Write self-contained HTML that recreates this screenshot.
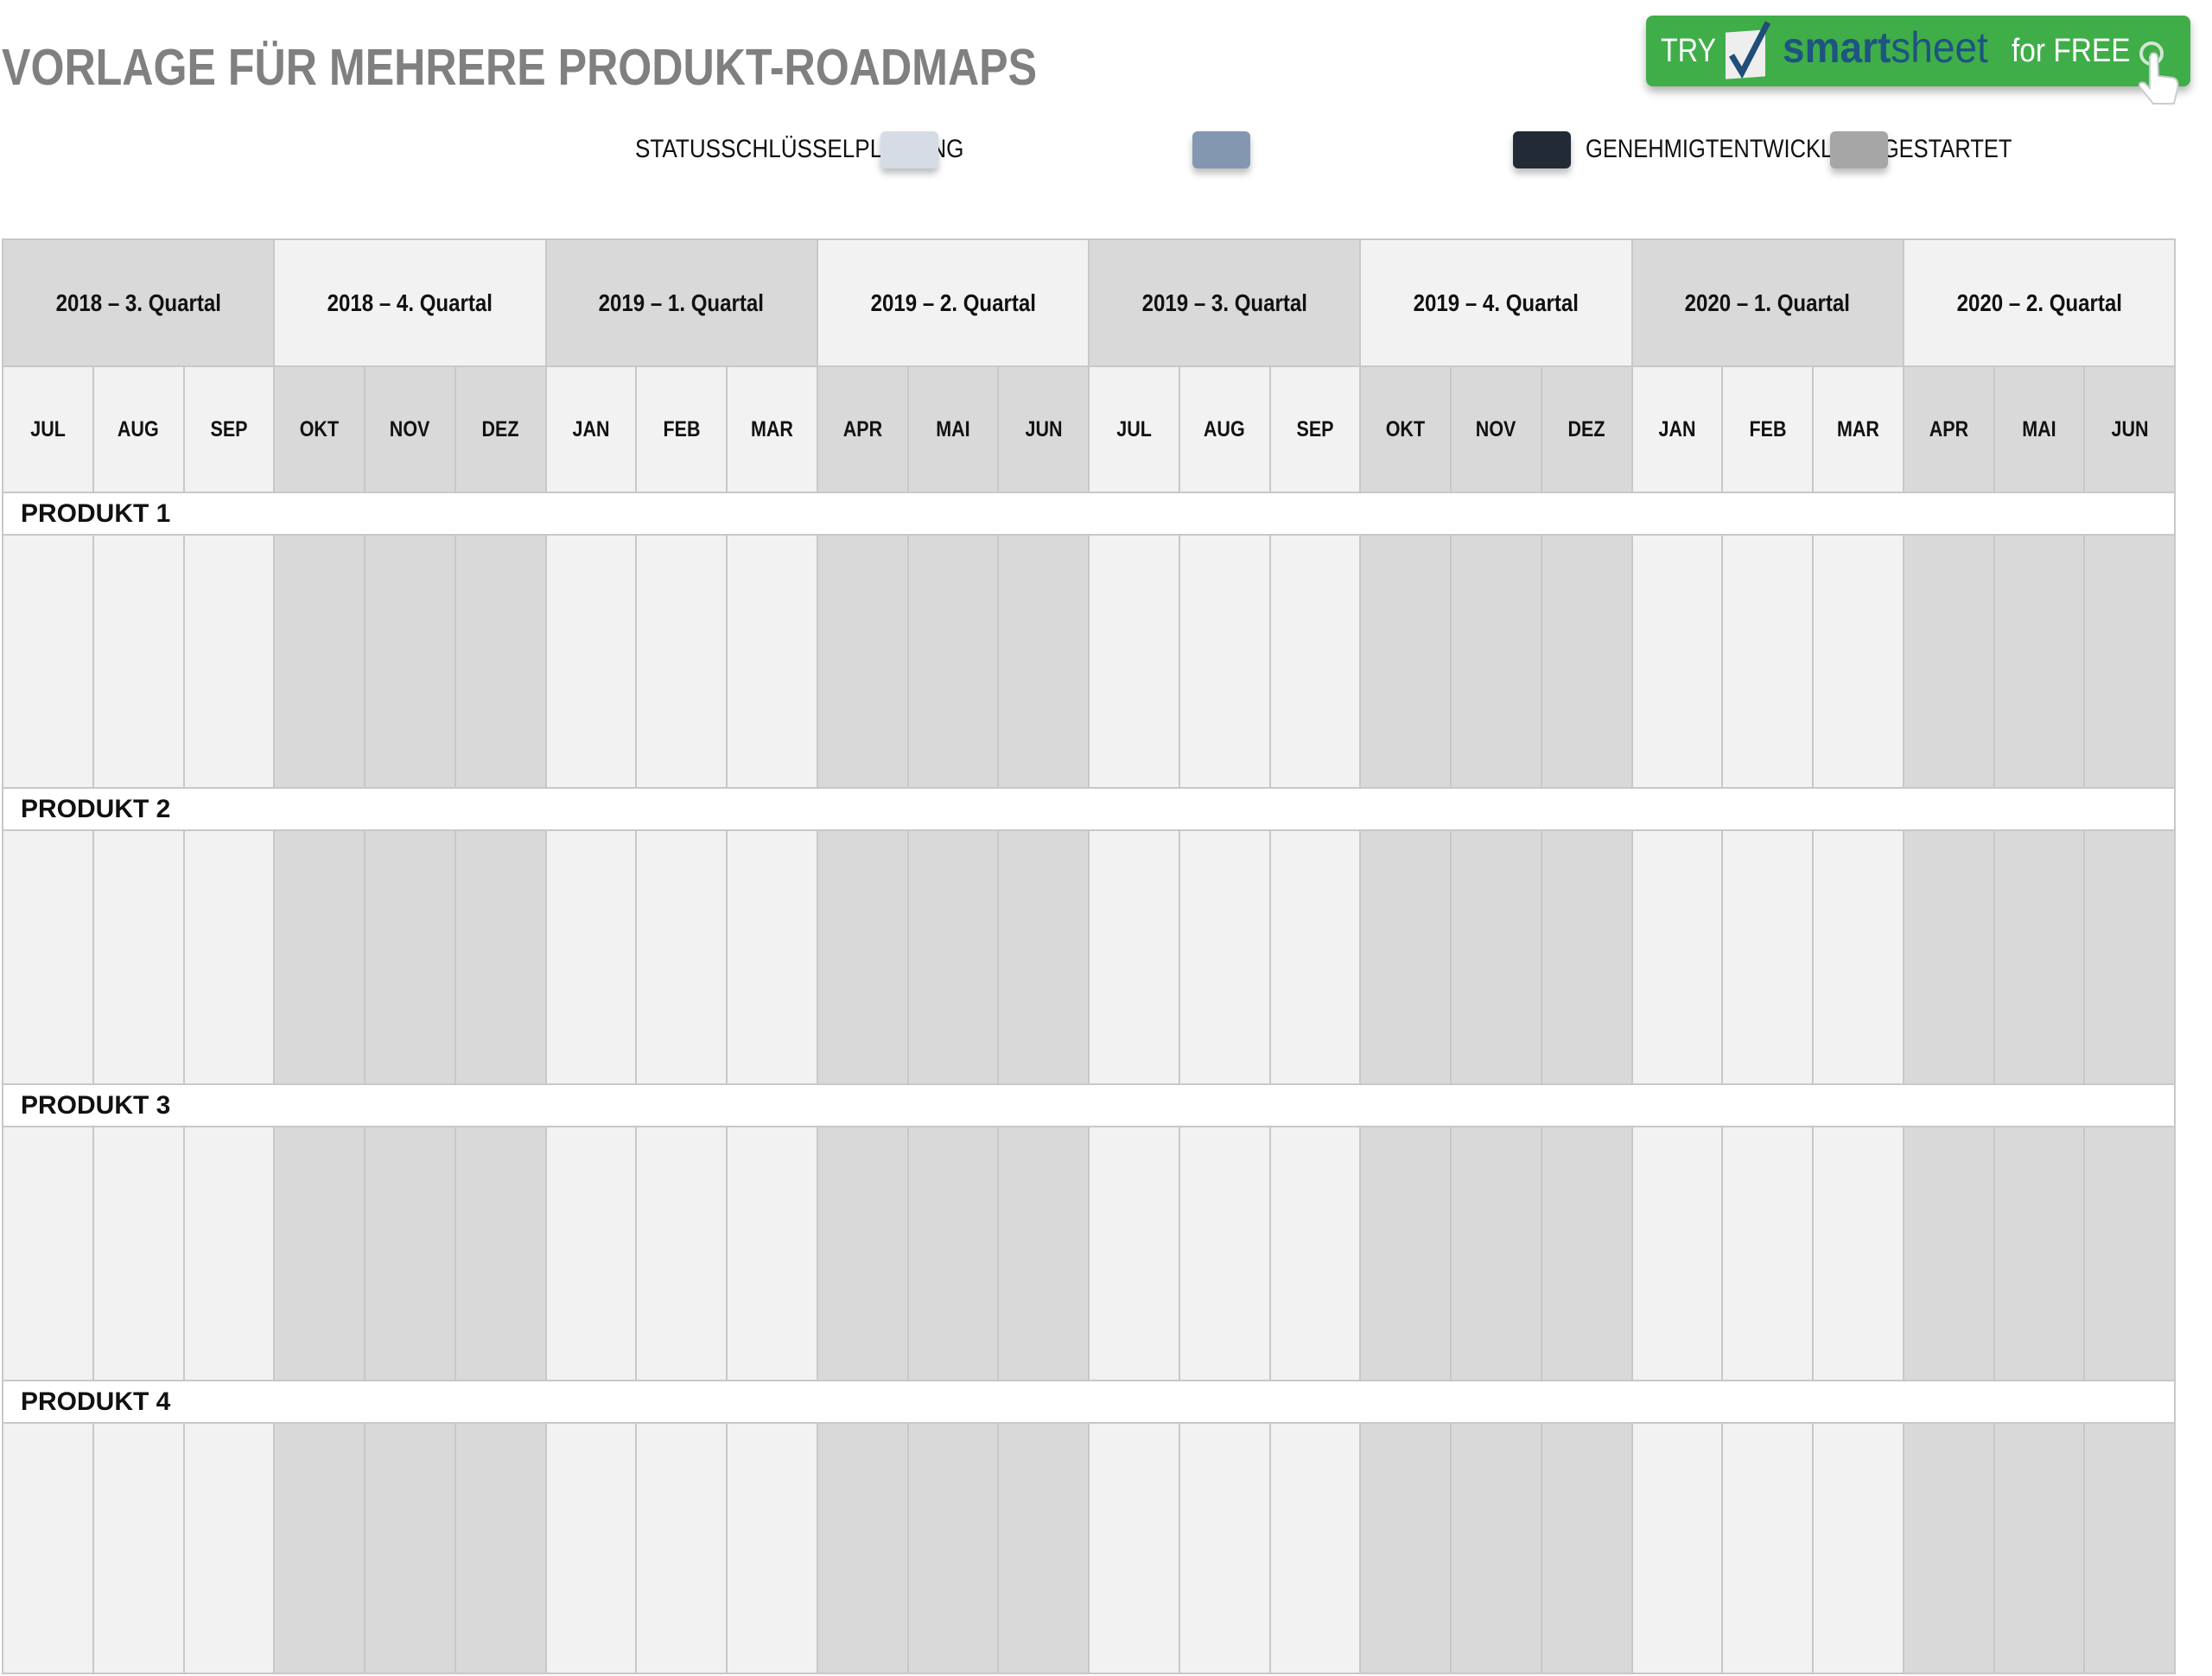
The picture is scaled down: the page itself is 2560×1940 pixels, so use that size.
<!DOCTYPE html>
<html><head><meta charset="utf-8"><style>
*{margin:0;padding:0;box-sizing:border-box}
body{width:2560px;height:1940px;background:#fff;position:relative;overflow:hidden;font-family:"Liberation Sans",sans-serif}
.t{position:absolute;white-space:nowrap;transform-origin:left top}
.sw{position:absolute;width:67px;height:43px;border-radius:6px;box-shadow:0 6px 8px rgba(0,0,0,.25)}
.g{position:absolute;left:2px;top:276px;width:2516px;background:#c8c8c8;padding:2px;display:grid;grid-template-columns:repeat(24,1fr);grid-template-rows:145px 144px 47px 291px 47px 292px 47px 292px 47px 288px;gap:2px}
.g>div{display:flex;align-items:center;justify-content:center;font-weight:bold;color:#111}
.q{grid-column:span 3;font-size:28px}
.m{font-size:25px}
.d{background:#d9d9d9}.l{background:#f2f2f2}
.p{grid-column:span 24;background:#fff;justify-content:flex-start!important;padding-left:20px;font-size:30px}
.s{display:inline-block;transform:scaleX(.86)}
</style></head><body>
<div class="t" style="left:2px;top:44px;font-size:59px;font-weight:bold;color:#808080;transform:scaleX(.85)">VORLAGE FÜR MEHRERE PRODUKT-ROADMAPS</div>
<div class="t" style="left:735px;top:156px;font-size:30px;color:#111;transform:scaleX(.87)">STATUSSCHLÜSSELPLANUNG</div>
<div class="t" style="left:1835px;top:156px;font-size:30px;color:#111;transform:scaleX(.85)">GENEHMIGTENTWICKLUNGGESTARTET</div>
<div class="sw" style="left:1019px;top:152px;background:#d6dce5"></div>
<div class="sw" style="left:1380px;top:152px;background:#8497b0"></div>
<div class="sw" style="left:1751px;top:152px;background:#222a35"></div>
<div class="sw" style="left:2118px;top:152px;background:#a6a6a6"></div>

<div style="position:absolute;left:1905px;top:18px;width:630px;height:82px;background:#3fae49;border-radius:8px;box-shadow:0 6px 10px rgba(0,0,0,.3)"></div>
<div class="t" style="left:1922px;top:38px;font-size:38px;color:#fff;transform:scaleX(.85)">TRY</div>
<div style="position:absolute;left:1997px;top:36px;width:46px;height:54px;background:#eee;transform:skewY(-4deg)"></div>
<svg style="position:absolute;left:1990px;top:22px" width="70" height="70"><path d="M14 42 L26 62 L56 4" stroke="#1e4e79" stroke-width="7" fill="none"/></svg>
<div class="t" style="left:2063px;top:26px;font-size:50px;color:#1e5480;transform:scaleX(.92)"><b>smart</b>sheet</div>
<div class="t" style="left:2328px;top:38px;font-size:38px;color:#fff;transform:scaleX(.88)">for FREE</div>
<div style="position:absolute;left:2476px;top:48px;width:28px;height:28px;border-radius:50%;border:4px solid #cfe8cf"></div>
<svg style="position:absolute;left:2470px;top:58px" width="60" height="68"><path d="M20 4 Q26 2 27 8 L28 30 L45 32 Q52 34 50 45 L46 62 L22 62 L6 42 Q5 36 12 38 L18 44 L18 8 Z" fill="#fff" stroke="#ccc" stroke-width="2"/></svg>

<div class="g">
<div class="q d"><span class="s">2018 – 3. Quartal</span></div><div class="q l"><span class="s">2018 – 4. Quartal</span></div><div class="q d"><span class="s">2019 – 1. Quartal</span></div><div class="q l"><span class="s">2019 – 2. Quartal</span></div><div class="q d"><span class="s">2019 – 3. Quartal</span></div><div class="q l"><span class="s">2019 – 4. Quartal</span></div><div class="q d"><span class="s">2020 – 1. Quartal</span></div><div class="q l"><span class="s">2020 – 2. Quartal</span></div>
<div class="m l"><span class="s">JUL</span></div><div class="m l"><span class="s">AUG</span></div><div class="m l"><span class="s">SEP</span></div><div class="m d"><span class="s">OKT</span></div><div class="m d"><span class="s">NOV</span></div><div class="m d"><span class="s">DEZ</span></div><div class="m l"><span class="s">JAN</span></div><div class="m l"><span class="s">FEB</span></div><div class="m l"><span class="s">MAR</span></div><div class="m d"><span class="s">APR</span></div><div class="m d"><span class="s">MAI</span></div><div class="m d"><span class="s">JUN</span></div><div class="m l"><span class="s">JUL</span></div><div class="m l"><span class="s">AUG</span></div><div class="m l"><span class="s">SEP</span></div><div class="m d"><span class="s">OKT</span></div><div class="m d"><span class="s">NOV</span></div><div class="m d"><span class="s">DEZ</span></div><div class="m l"><span class="s">JAN</span></div><div class="m l"><span class="s">FEB</span></div><div class="m l"><span class="s">MAR</span></div><div class="m d"><span class="s">APR</span></div><div class="m d"><span class="s">MAI</span></div><div class="m d"><span class="s">JUN</span></div>
<div class="p">PRODUKT 1</div>
<div class="l"></div><div class="l"></div><div class="l"></div><div class="d"></div><div class="d"></div><div class="d"></div><div class="l"></div><div class="l"></div><div class="l"></div><div class="d"></div><div class="d"></div><div class="d"></div><div class="l"></div><div class="l"></div><div class="l"></div><div class="d"></div><div class="d"></div><div class="d"></div><div class="l"></div><div class="l"></div><div class="l"></div><div class="d"></div><div class="d"></div><div class="d"></div>
<div class="p">PRODUKT 2</div>
<div class="l"></div><div class="l"></div><div class="l"></div><div class="d"></div><div class="d"></div><div class="d"></div><div class="l"></div><div class="l"></div><div class="l"></div><div class="d"></div><div class="d"></div><div class="d"></div><div class="l"></div><div class="l"></div><div class="l"></div><div class="d"></div><div class="d"></div><div class="d"></div><div class="l"></div><div class="l"></div><div class="l"></div><div class="d"></div><div class="d"></div><div class="d"></div>
<div class="p">PRODUKT 3</div>
<div class="l"></div><div class="l"></div><div class="l"></div><div class="d"></div><div class="d"></div><div class="d"></div><div class="l"></div><div class="l"></div><div class="l"></div><div class="d"></div><div class="d"></div><div class="d"></div><div class="l"></div><div class="l"></div><div class="l"></div><div class="d"></div><div class="d"></div><div class="d"></div><div class="l"></div><div class="l"></div><div class="l"></div><div class="d"></div><div class="d"></div><div class="d"></div>
<div class="p">PRODUKT 4</div>
<div class="l"></div><div class="l"></div><div class="l"></div><div class="d"></div><div class="d"></div><div class="d"></div><div class="l"></div><div class="l"></div><div class="l"></div><div class="d"></div><div class="d"></div><div class="d"></div><div class="l"></div><div class="l"></div><div class="l"></div><div class="d"></div><div class="d"></div><div class="d"></div><div class="l"></div><div class="l"></div><div class="l"></div><div class="d"></div><div class="d"></div><div class="d"></div>
</div>
</body></html>
